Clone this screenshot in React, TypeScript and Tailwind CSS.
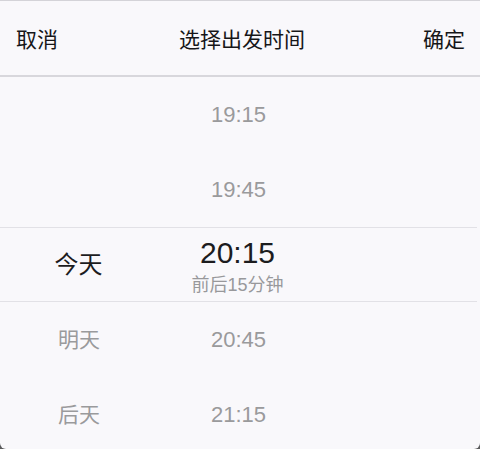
import React from 'react';

const font = { fontFamily: '"Liberation Sans", "Noto Sans CJK SC", sans-serif' };

const App = () => {
  const rows = [
    { day: '', time: '19:15' },
    { day: '', time: '19:45' },
    { day: '今天', time: '20:15', selected: true },
    { day: '明天', time: '20:45' },
    { day: '后天', time: '21:15' },
  ];

  return (
    <div className="w-[480px] h-[449px] bg-[#5a5a5c] overflow-hidden" style={font}>
      <div className="h-[449px] bg-[#f9f8fb] rounded-b-[6px] border-t border-[#d4d3d8] overflow-hidden">
        {/* Header */}
        <div className="h-[74px] flex items-center justify-between pl-[16px] pr-[15px] pt-[3px] text-[21px] text-[#161618]">
          <span>取消</span>
          <span className="pl-[3px]">选择出发时间</span>
          <span>确定</span>
        </div>
        <div className="h-[2px] bg-[#d8d7dc]" />

        {/* Picker */}
        <div className="flex flex-col">
          {rows.map((r) => (
            <div
              key={r.time}
              className={
                r.selected
                  ? 'h-[75px] grid grid-cols-3 items-center border-y border-[#e2e1e6] mr-[3px]'
                  : 'h-[75px] grid grid-cols-3 items-center'
              }
            >
              <div
                className={
                  r.selected
                    ? 'text-center text-[24px] text-[#1c1c1e] pr-[2px]'
                    : 'text-center text-[21px] text-[#9a9a9c] pr-[2px]'
                }
              >
                {r.day}
              </div>
              {r.selected ? (
                <div className="flex flex-col items-center mt-[4px] pr-[2px]">
                  <span className="text-[30px] leading-[30px] text-[#1c1c1e]">{r.time}</span>
                  <span className="text-[18px] leading-[20px] text-[#98989b] mt-[7px]">前后15分钟</span>
                </div>
              ) : (
                <div className="text-center text-[22px] text-[#9a9a9c] pr-[3px]">{r.time}</div>
              )}
              <div />
            </div>
          ))}
        </div>
      </div>
    </div>
  );
};

export default App;
